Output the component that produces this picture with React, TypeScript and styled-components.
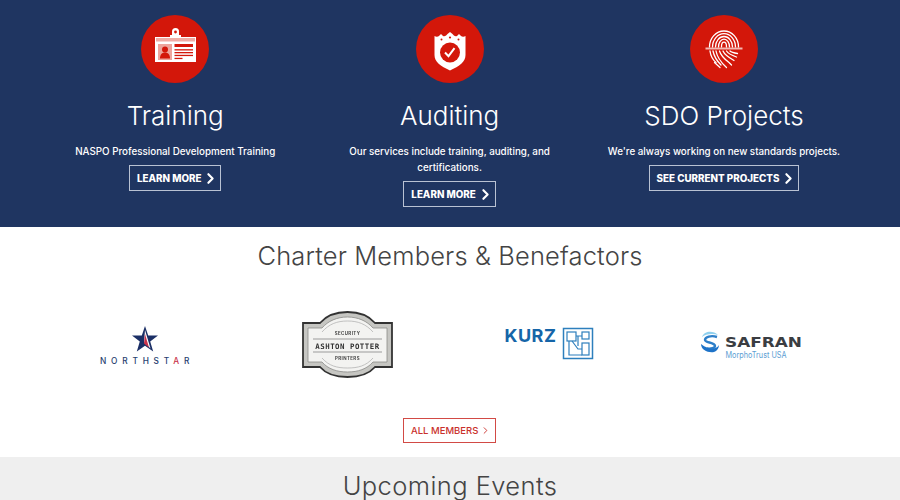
import React from "react";
import styled, { createGlobalStyle } from "styled-components";
import { ChevronRight } from "lucide-react";

const Global = createGlobalStyle`
  html, body { margin: 0; padding: 0; background: #fff; }
  body { font-family: Inter, "Open Sans", "Liberation Sans", sans-serif; width: 900px; height: 500px; overflow: hidden; }
`;

const Hero = styled.section`
  background: #1f3561;
  height: 227px;
  box-sizing: border-box;
  padding: 15px 38px 0;
  display: grid;
  grid-template-columns: repeat(3, 274.4px);
  color: #fff;
`;
const Service = styled.div`
  display: flex;
  flex-direction: column;
  align-items: center;
  text-align: center;
`;
const Disc = styled.div`
  width: 68px;
  height: 68px;
  border-radius: 50%;
  background: #d3170a;
  flex: none;
  svg { display: block; }
`;
const ServiceTitle = styled.h2`
  margin: 17px 0 0;
  font-size: 26px;
  line-height: 32px;
  font-weight: 300;
  white-space: nowrap;
`;
const Blurb = styled.p`
  margin: 12px 0 0;
  width: 240px;
  font-size: 9.8px;
  line-height: 16px;
  font-weight: 500;
`;
const OutlineLink = styled.a`
  margin-top: 5px;
  height: 26px;
  box-sizing: border-box;
  padding: 0 7px;
  border: 1px solid #b9c2d3;
  display: inline-flex;
  align-items: center;
  font-size: 9.8px;
  font-weight: 800;
  color: #fff;
  white-space: nowrap;
  svg { margin: 0 -6px 0 1px; }
`;
const Members = styled.section`
  height: 230px;
  text-align: center;
  display: flex;
  flex-direction: column;
  align-items: center;
`;
const SectionTitle = styled.h2`
  margin: 13px 0 1px;
  height: 32px;
  font-size: 25.5px;
  line-height: 32px;
  font-weight: 300;
  color: #444;
  letter-spacing: 0.14px;
  white-space: nowrap;
`;
const LogoRow = styled.div`
  margin: 33px 4px 0 0;
  width: 808px;
  display: grid;
  grid-template-columns: repeat(4, 202px);
  justify-items: center;
  svg { display: block; }
`;
const RedLink = styled.a`
  margin: 36px 1px 0 0;
  height: 25px;
  width: 93px;
  box-sizing: border-box;
  padding-left: 7px;
  border: 1px solid #d24a45;
  display: inline-flex;
  align-items: center;
  gap: 2px;
  font-size: 9.5px;
  font-weight: 500;
  color: #c9302c;
  white-space: nowrap;
`;
const Events = styled.section`
  background: #efefef;
  height: 43px;
  text-align: center;
  overflow: hidden;
`;
const EventsTitle = styled(SectionTitle)`
  margin-top: 13px;
  letter-spacing: 0.42px;
`;

const IdIcon = () => (
  <svg width="68" height="68" viewBox="0 0 68 68">
    <path d="M31 22v-5.500a3.500 3.500 0 0 1 7 0V22z" fill="#fff" />
    <circle cx="34.500" cy="17" r="1.400" fill="#d3170a" />
    <rect x="29" y="20" width="11" height="2" fill="#fff" />
    <rect x="14" y="22" width="41" height="25" fill="#fff" />
    <rect x="15" y="23" width="39" height="3.500" fill="#f0aca5" />
    <rect x="17" y="29" width="14" height="16" fill="#eda59d" />
    <circle cx="24" cy="34.500" r="3" fill="#d3170a" />
    <path d="M19 43.500c0-4 2-6 5-6s5 2 5 6z" fill="#d3170a" />
    <rect x="33.500" y="29" width="18.500" height="3" fill="#d3170a" />
    <rect x="33.500" y="34.200" width="18.500" height="1.300" fill="#d3170a" />
    <rect x="33.500" y="37" width="18.500" height="1.300" fill="#d3170a" />
    <rect x="33.500" y="39.800" width="18.500" height="1.300" fill="#d3170a" />
    <rect x="33.500" y="42.800" width="8" height="1.300" fill="#d3170a" />
  </svg>
);

const ShieldIcon = () => (
  <svg width="68" height="68" viewBox="0 0 68 68">
    <path d="M18.500 21c1.500 1 3.500 1 5-.5l1.500-1.500 2 2c2 .7 3.500-.5 4.500-2l2.500-2 2.500 2c1 1.500 2.500 2.700 4.500 2l2-2 1.500 1.500c1.500 1.500 3.500 1.500 5 .5v19c0 7-6 11-15.500 15.500C24.500 51 18.500 47 18.500 40z" fill="#fff" />
    <circle cx="34" cy="37.500" r="10" fill="#d3170a" />
    <path d="M29 37.500l3.500 3.700 6-8" fill="none" stroke="#fff" strokeWidth="2" />
    <circle cx="25.500" cy="24.500" r="1" fill="#d3170a" />
    <circle cx="34" cy="22.500" r="1.100" fill="#d3170a" />
    <circle cx="42.500" cy="24.500" r="1" fill="#d3170a" />
  </svg>
);

const FingerIcon = () => (
  <svg width="68" height="68" viewBox="0 0 68 68" fill="none" stroke="#fff" strokeWidth="1.300" strokeLinecap="round">
    <path d="M19.500 32A14.500 16 0 0 1 48.500 32" />
    <path d="M22.500 32A11.500 13.300 0 0 1 45.500 32" />
    <path d="M25.500 32A8.500 10.500 0 0 1 42.500 32" />
    <path d="M28.500 32A5.500 7.800 0 0 1 39.500 32" />
    <path d="M31.500 32A2.500 4.800 0 0 1 36.500 32" />
    <path d="M20 36C20.500 40 22.500 44.500 26 47.500" />
    <path d="M23 36C24 41 27 46 31 50" />
    <path d="M26 36C27 41.500 31 47.500 36.500 52.500" />
    <path d="M29.500 36C30.500 39.500 33 43 39 47.500L41.500 50" />
    <path d="M33 36C34 38.500 37 41.500 44 45.500" />
    <path d="M36.500 36C37.500 37.500 41 40 46.500 42" />
    <path d="M40 36C41 37 44 38 47.500 38.500" />
    <path d="M24.500 47.500L30 52.500" />
    <rect x="15.500" y="32.500" width="37" height="2" fill="#f3b8b2" stroke="none" />
  </svg>
);

const NorthstarLogo = () => (
  <svg width="110" height="76" viewBox="0 0 110 76">
    <path d="M55 20l3.200 9.500H68l-7.800 6 3 10L55 39.800 46.800 45.500l3-10-7.800-6h9.800z" fill="#1b2f66" />
    <path d="M55 24l5.500 18.500L54 36z" fill="#fff" />
    <path d="M55 28l4 13.500-5-4z" fill="#c9324a" />
    <text x="10" y="58" fontFamily="Inter, sans-serif" fontWeight="500" fontSize="8.300" letterSpacing="4.800" fill="#27406f">
      NORTHST<tspan fill="#c9324a">A</tspan>R
    </text>
  </svg>
);

const AshtonLogo = () => (
  <svg width="110" height="76" viewBox="0 0 110 76">
    <defs>
      <filter id="soft" x="-5%" y="-5%" width="110%" height="110%">
        <feGaussianBlur stdDeviation="0.600" />
      </filter>
      <filter id="softText" x="-5%" y="-20%" width="110%" height="140%">
        <feGaussianBlur stdDeviation="0.250" />
      </filter>
    </defs>
    <g filter="url(#soft)">
      <path d="M11 17H28C34 10 44 6 55.500 6S77 10 83 17H100V61H83C77 68 67 71 55.500 71S34 68 28 61H11Z" fill="#c6c6c2" stroke="#333" strokeWidth="1.800" />
      <path d="M16 22H30C36 15 45 11 55.500 11S75 15 81 22H95V56H81C75 63 66 66 55.500 66S36 63 30 56H16Z" fill="#f3f3f1" stroke="#8a8a88" strokeWidth="0.800" />
      <path d="M21 33H90M21 46H90" stroke="#777" strokeWidth="0.700" />
      <path d="M30 26C37 18 45 15 55.500 15S74 18 81 26M30 52C37 60 45 62 55.500 62S74 60 81 52" fill="none" stroke="#aaa" strokeWidth="0.700" />
    </g>
    <g filter="url(#softText)">
      <text x="55.500" y="42.500" textAnchor="middle" fontFamily="'DejaVu Sans Mono', monospace" fontWeight="700" fontSize="7.400" letterSpacing="0.500" fill="#333">ASHTON POTTER</text>
      <text x="55.500" y="29" textAnchor="middle" fontFamily="Inter, sans-serif" fontWeight="700" fontSize="4.400" letterSpacing="0.400" fill="#444">SECURITY</text>
      <text x="55.500" y="53.500" textAnchor="middle" fontFamily="Inter, sans-serif" fontWeight="700" fontSize="4.400" letterSpacing="0.400" fill="#444">PRINTERS</text>
    </g>
  </svg>
);

const KurzLogo = () => (
  <svg width="110" height="76" viewBox="0 0 110 76">
    <text x="10.500" y="36" fontFamily="Inter, sans-serif" fontWeight="700" fontSize="18" letterSpacing="0.500" fill="#1565a8">KURZ</text>
    <g fill="none" stroke="#2d7fbd" strokeWidth="1.200">
      <rect x="69.500" y="22.500" width="29" height="30" strokeWidth="1.500" />
      <rect x="73" y="26" width="9" height="9" />
      <rect x="88" y="26" width="7" height="7" />
      <rect x="88" y="37" width="7" height="12" />
      <path d="M82 30h6M75 35v14h13M78 35l6 8h4M84 30v10" />
    </g>
  </svg>
);

const SafranLogo = () => (
  <svg width="110" height="76" viewBox="0 0 110 76">
    <path d="M22 29C17 24 8 25 6 31C9 28 17 27 22 29Z" fill="#8fd0ee" />
    <path d="M21 31C15 29 9 31 9 34C9 37 19 36 19 40C19 42 15 43 11 42.500" fill="none" stroke="#2d7fc9" strokeWidth="2.400" />
    <path d="M5 38C5 44 12 47 18 46C21 45 23 42 23 39C21 43 14 45 5 38Z" fill="#1e73c8" />
    <text x="29" y="40.500" fontFamily="'DejaVu Sans', sans-serif" fontWeight="700" fontSize="14.300" fill="#3a3d42" textLength="77" lengthAdjust="spacingAndGlyphs">SAFRAN</text>
    <text x="29.500" y="51.500" fontFamily="Inter, sans-serif" fontSize="8.600" fill="#5d9ed3" textLength="61" lengthAdjust="spacingAndGlyphs">MorphoTrust USA</text>
  </svg>
);

const services = [
  { icon: <IdIcon />, title: "Training", text: "NASPO Professional Development Training", link: "LEARN MORE" },
  { icon: <ShieldIcon />, title: "Auditing", text: "Our services include training, auditing, and certifications.", link: "LEARN MORE" },
  { icon: <FingerIcon />, title: "SDO Projects", text: "We're always working on new standards projects.", link: "SEE CURRENT PROJECTS" },
];

export default function App() {
  return (
    <>
      <Global />
      <Hero>
        {services.map((s) => (
          <Service key={s.title}>
            <Disc>{s.icon}</Disc>
            <ServiceTitle>{s.title}</ServiceTitle>
            <Blurb>{s.text}</Blurb>
            <OutlineLink>
              {s.link}
              <ChevronRight size={17} strokeWidth={3} />
            </OutlineLink>
          </Service>
        ))}
      </Hero>
      <Members>
        <SectionTitle>Charter Members &amp; Benefactors</SectionTitle>
        <LogoRow>
          <NorthstarLogo />
          <AshtonLogo />
          <KurzLogo />
          <SafranLogo />
        </LogoRow>
        <RedLink>
          ALL MEMBERS
          <ChevronRight size={11} strokeWidth={2} />
        </RedLink>
      </Members>
      <Events>
        <EventsTitle>Upcoming Events</EventsTitle>
      </Events>
    </>
  );
}
